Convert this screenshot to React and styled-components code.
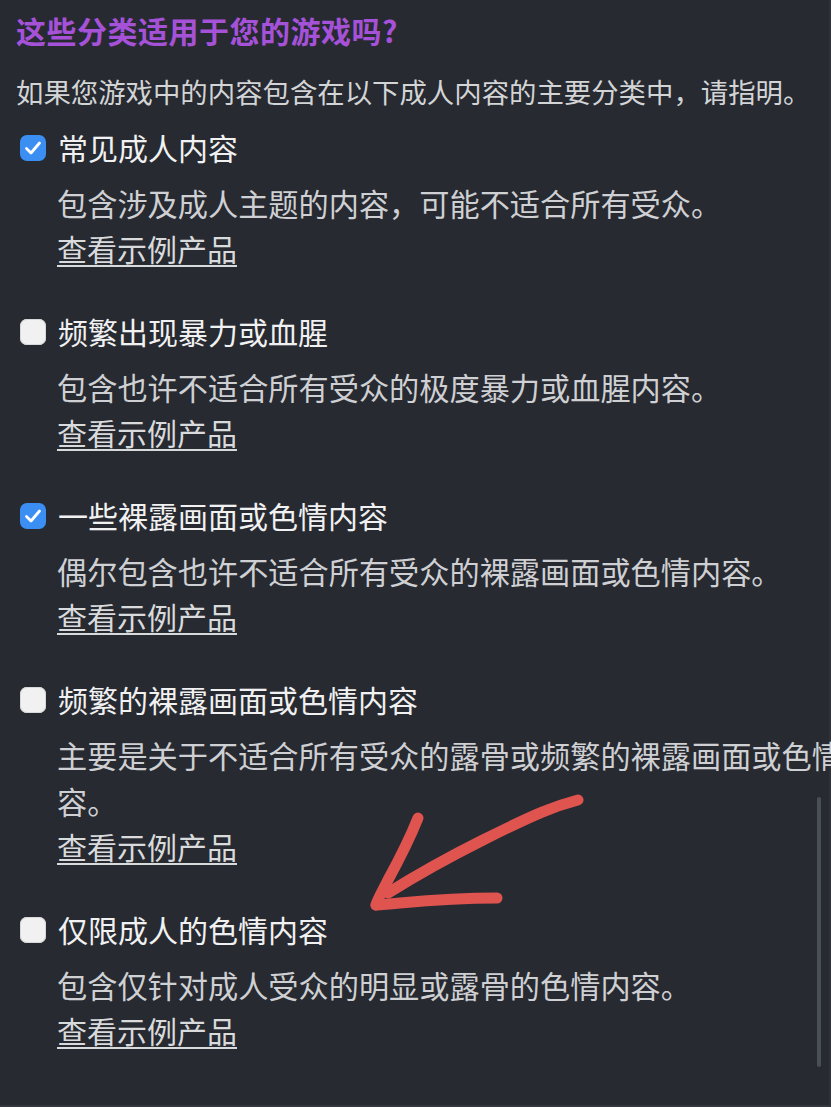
import React from "react"
import styled, { createGlobalStyle } from "styled-components"

const GlobalStyle = createGlobalStyle`
  html, body {
    margin: 0;
    padding: 0;
    background: #272a31;
    overflow: hidden;
  }
  body {
    font-family: "Noto Sans CJK SC", "Noto Sans", sans-serif;
  }
`

const categories = [
  {
    label: "常见成人内容",
    desc: "包含涉及成人主题的内容，可能不适合所有受众。",
    checked: true,
  },
  {
    label: "频繁出现暴力或血腥",
    desc: "包含也许不适合所有受众的极度暴力或血腥内容。",
    checked: false,
  },
  {
    label: "一些裸露画面或色情内容",
    desc: "偶尔包含也许不适合所有受众的裸露画面或色情内容。",
    checked: true,
  },
  {
    label: "频繁的裸露画面或色情内容",
    desc: "主要是关于不适合所有受众的露骨或频繁的裸露画面或色情内容。",
    checked: false,
  },
  {
    label: "仅限成人的色情内容",
    desc: "包含仅针对成人受众的明显或露骨的色情内容。",
    checked: false,
  },
]

const Page = styled.div`
  position: relative;
  width: 831px;
  height: 1107px;
  box-sizing: border-box;
  padding: 10px 0 0 16px;
  border-right: 2px solid #2e3138;
  border-bottom: 2px solid #34373e;
`

const Title = styled.h2`
  margin: 0;
  font-size: 30px;
  line-height: 40px;
  font-weight: 700;
  color: #a552d9;
  letter-spacing: 0.5px;
`

const Intro = styled.p`
  margin: 21px 0 0;
  font-size: 27.4px;
  line-height: 40px;
  color: #d3d4d6;
  white-space: nowrap;
`

const List = styled.ul`
  list-style: none;
  margin: 0;
  padding: 0;
  margin-top: 14px;
`

const Item = styled.li`
  margin-bottom: ${({ $last }) => ($last ? "0" : "38px")};
`

const Label = styled.label`
  display: flex;
  align-items: center;
  gap: 12px;
  padding-left: 4px;
  font-size: 30px;
  line-height: 45px;
  color: #f1f1f2;
  cursor: pointer;
`

const Box = styled.span`
  flex: none;
  width: 26px;
  height: 26px;
  border-radius: 7px;
  display: flex;
  align-items: center;
  justify-content: center;
  background: ${({ $checked }) => ($checked ? "#3b8ff3" : "#f1f1f1")};
  box-shadow: ${({ $checked }) =>
    $checked ? "none" : "inset 0 0 0 1px #d8d8d8"};
`

const Body = styled.div`
  padding-left: 41px;
  margin-top: 10px;
`

const Description = styled.p`
  margin: 0;
  width: 822px;
  font-size: 30.2px;
  line-height: 46px;
  color: #cfd0d3;
`

const ExampleLink = styled.a`
  display: inline-block;
  font-size: 30px;
  line-height: 45px;
  color: #d9dadc;
  text-decoration: underline;
  text-decoration-thickness: 2px;
  text-underline-offset: 4px;
`

const Scrollbar = styled.div`
  position: absolute;
  right: 8px;
  top: 797px;
  width: 4px;
  height: 270px;
  border-radius: 2px;
  background: #4a4e55;
`

const Arrow = styled.svg`
  position: absolute;
  left: 0;
  top: 0;
  pointer-events: none;
`

const Check = () => (
  <svg width="22" height="22" viewBox="0 0 22 22">
    <path
      d="M4.5 11.5 L9 16 L17.5 6"
      fill="none"
      stroke="#fff"
      strokeWidth="2.8"
      strokeLinecap="round"
      strokeLinejoin="round"
    />
  </svg>
)

const App = () => {
  return (
    <>
      <GlobalStyle />
      <Page>
        <Title>这些分类适用于您的游戏吗?</Title>
        <Intro>如果您游戏中的内容包含在以下成人内容的主要分类中，请指明。</Intro>
        <List>
          {categories.map((cat, index) => (
            <Item key={index} $last={index === categories.length - 1}>
              <Label>
                <Box $checked={cat.checked}>{cat.checked && <Check />}</Box>
                {cat.label}
              </Label>
              <Body>
                <Description>{cat.desc}</Description>
                <ExampleLink href="#">查看示例产品</ExampleLink>
              </Body>
            </Item>
          ))}
        </List>
        <Scrollbar />
        <Arrow width="831" height="1107" viewBox="0 0 831 1107">
          <g
            fill="none"
            stroke="#e0544f"
            strokeWidth="11"
            strokeLinecap="round"
            strokeLinejoin="round"
          >
            <path d="M578 800 C555 806 537 813 483 840 C455 854 420 873 388 893" />
            <path d="M418 818 C410 838 400 858 388 880 C382 892 377 900 376 905" />
            <path d="M376 905 C405 903 440 898 497 898" />
          </g>
        </Arrow>
      </Page>
    </>
  )
}

export default App
